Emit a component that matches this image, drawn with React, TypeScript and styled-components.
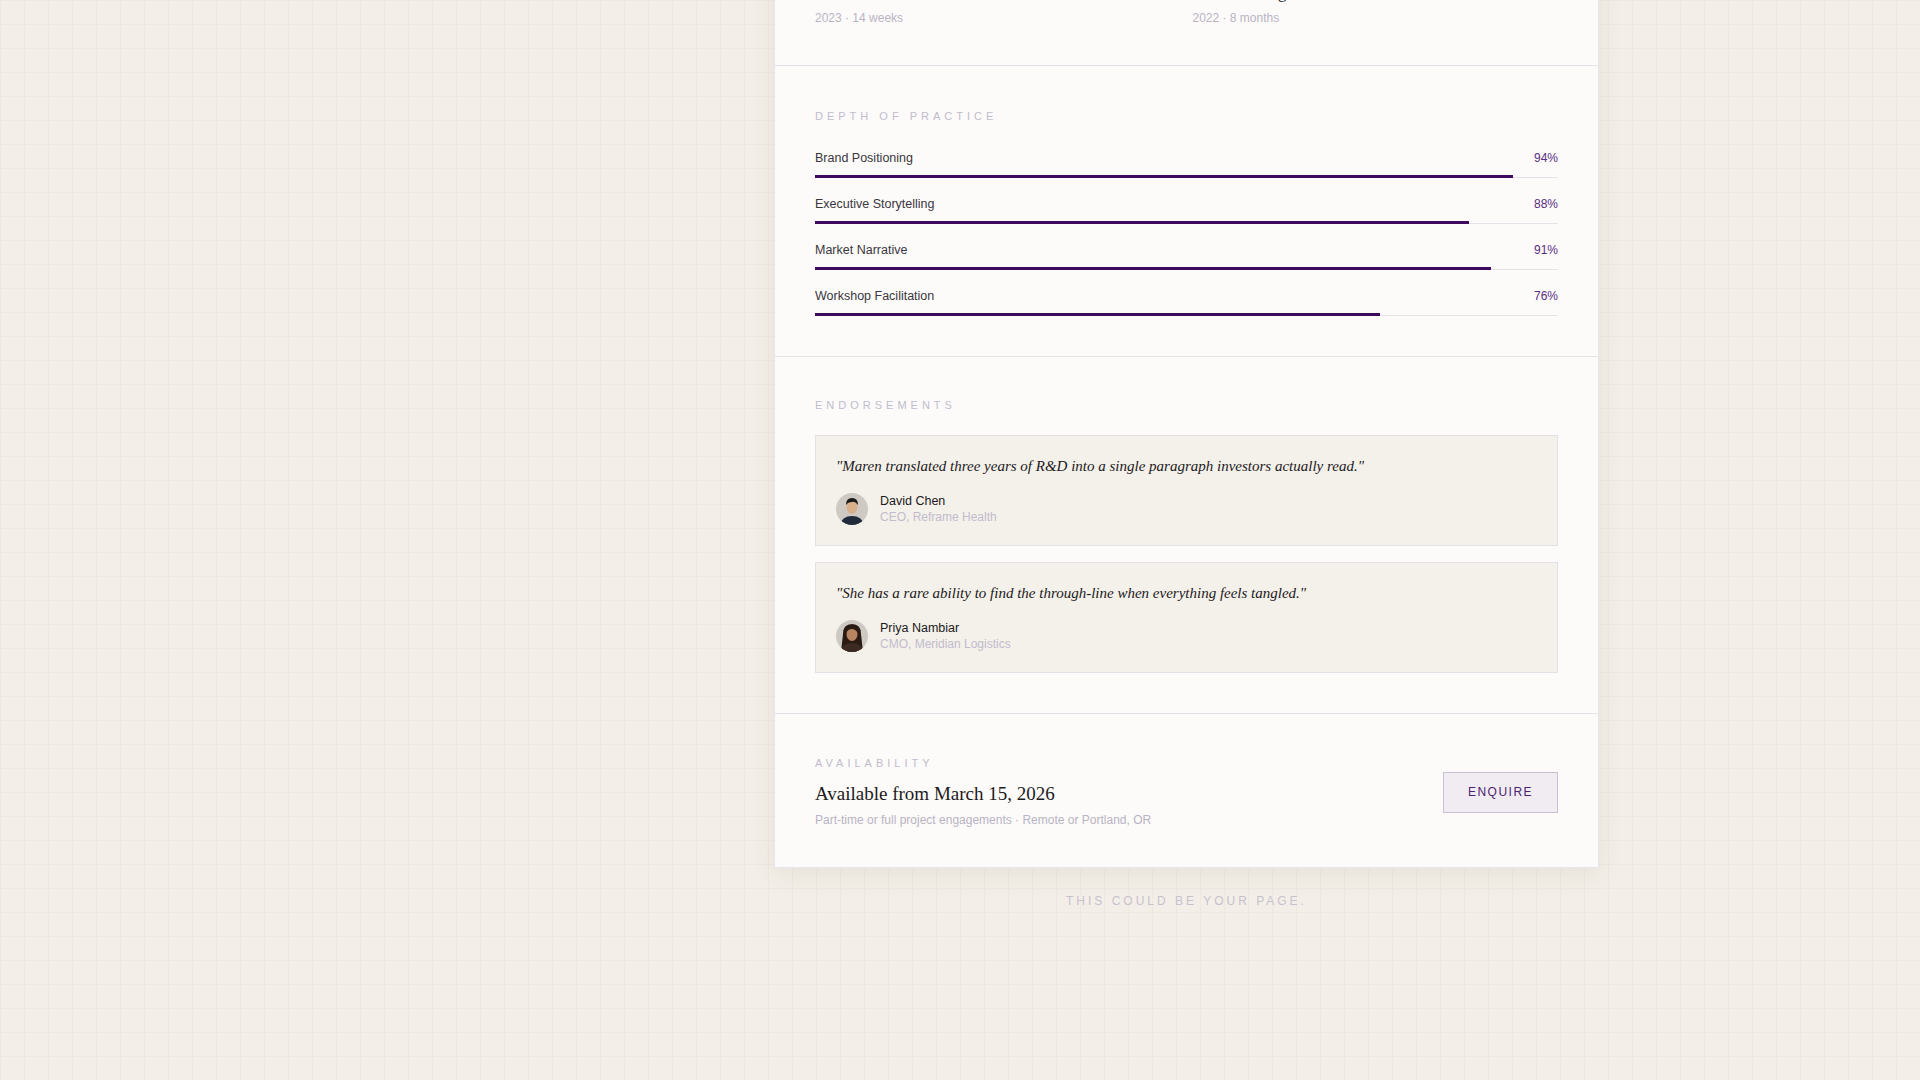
import React from "react";
import styled, { createGlobalStyle } from "styled-components";

const Global = createGlobalStyle`
  html, body { margin: 0; padding: 0; }
  body {
    background-color: #f3efe8;
    background-image:
      linear-gradient(rgba(200,190,175,0.12) 1px, transparent 1px),
      linear-gradient(90deg, rgba(200,190,175,0.12) 1px, transparent 1px);
    background-size: 24px 24px;
    font-family: "Liberation Sans", Arial, sans-serif;
    height: 1080px;
    overflow: hidden;
  }
`;

const Page = styled.div`
  display: grid; grid-template-columns: 774px 825px;
  margin-top: -46px;
`;
const Main = styled.div` grid-column: 2; display: flex; flex-direction: column; align-items: center; `;
const Card = styled.div`
  width: 825px; box-sizing: border-box; background: #fcfbf9; border: 1px solid #e8e4ec;
  box-shadow: 0 6px 24px rgba(80,60,40,0.08);
`;
const Section = styled.section<{ $pt?: number; $pb?: number }>`
  padding: ${p => p.$pt ?? 46}px 40px ${p => p.$pb ?? 40}px;
  & + & { border-top: 1px solid #e6e2ea; }
`;
const Label = styled.div<{ $mb?: number }>`
  font-size: 11px; letter-spacing: 4px; color: #c2bccd; text-transform: uppercase;
  margin-bottom: ${p => p.$mb ?? 24}px;
`;
const Projects = styled.div`
  display: grid; grid-template-columns: 1fr 1fr; gap: 12px;
`;
const ProjTitle = styled.div`
  font-family: "Liberation Serif", serif; font-size: 17px; color: #1d1a22; margin-bottom: 8px;
`;
const Meta = styled.div` font-size: 12px; color: #b9b3c4; `;
const Skill = styled.div` margin-bottom: 18px; &:last-child { margin-bottom: 0; } `;
const SkillHead = styled.div`
  display: flex; justify-content: space-between; font-size: 12.5px; color: #3a3640;
  line-height: 16px; margin-bottom: 9px;
`;
const Pct = styled.span` color: #5a2d82; font-size: 12px; `;
const Track = styled.div` height: 3px; border-bottom: 1px solid #e6e2ea; box-sizing: border-box; `;
const Fill = styled.div` height: 3px; background: #3d0a5e; `;
const Quote = styled.div`
  background: #f4f0ea; border: 1px solid #e4e0e8; padding: 22px 20px 20px;
  & + & { margin-top: 16px; }
`;
const QText = styled.p`
  margin: 0 0 18px; font-family: "Liberation Serif", serif; font-style: italic; font-size: 15px; color: #1d1a22;
`;
const Person = styled.div` display: flex; align-items: center; gap: 12px; `;
const Name = styled.div` font-size: 12.5px; color: #1d1a22; line-height: 16px; `;
const Role = styled.div` font-size: 12px; color: #c2bccd; line-height: 16px; `;
const AvailRow = styled.div` display: flex; justify-content: space-between; align-items: center; `;
const AvailHead = styled.div` font-family: "Liberation Serif", serif; font-size: 19px; color: #1d1a22; margin: -10px 0 8px; `;
const Btn = styled.button`
  width: 115px; height: 41px; background: #f1ecf1; border: 1px solid #c9c1d3;
  color: #4a2470; font-family: "Liberation Sans", Arial, sans-serif; font-size: 12px; letter-spacing: 1.5px;
`;
const Footer = styled.div`
  margin-top: 26px; font-size: 12px; letter-spacing: 3px; color: #c7c1ce;
`;

const skills = [
  ["Brand Positioning", 94], ["Executive Storytelling", 88], ["Market Narrative", 91], ["Workshop Facilitation", 76],
] as const;

const Avatar = ({ id, hair, skin, shirt, long }: { id: string; hair: string; skin: string; shirt: string; long?: boolean }) => (
  <svg width="32" height="32" viewBox="0 0 32 32">
    <defs><clipPath id={id}><circle cx="16" cy="16" r="16" /></clipPath></defs>
    <g clipPath={`url(#${id})`}>
      <rect width="32" height="32" fill="#cfc9c4" />
      {long && <path d="M7 14 Q7 4 16 4 Q25 4 25 14 L27 32 L5 32 Z" fill={hair} />}
      <path d="M4 32 Q6 23 16 23 Q26 23 28 32 Z" fill={shirt} />
      <ellipse cx="16" cy="14" rx="5.5" ry="7" fill={skin} />
      {!long && <path d="M10 12 Q10 5 16 5 Q22 5 22 12 Q19 8 16 9 Q12 9 10 12 Z" fill={hair} />}
      {long && <path d="M10 13 Q11 6 16 6 Q21 6 22 13 Q19 9 16 9 Q12 9 10 13 Z" fill={hair} />}
    </g>
  </svg>
);

export default function App() {
  return (
    <>
      <Global />
      <Page>
        <Main>
          <Card>
            <Section $pt={28} $pb={40}>
              <Projects>
                <div><ProjTitle>Reframe Health — IPO Narrative</ProjTitle><Meta>2023 · 14 weeks</Meta></div>
                <div><ProjTitle>Meridian Logistics — Global Rebrand</ProjTitle><Meta>2022 · 8 months</Meta></div>
              </Projects>
            </Section>
            <Section $pt={44} $pb={40}>
              <Label $mb={28}>Depth of Practice</Label>
              {skills.map(([n, v]) => (
                <Skill key={n}>
                  <SkillHead><span>{n}</span><Pct>{v}%</Pct></SkillHead>
                  <Track><Fill style={{ width: `${v}%` }} /></Track>
                </Skill>
              ))}
            </Section>
            <Section $pt={42} $pb={40}>
              <Label>Endorsements</Label>
              <Quote>
                <QText>"Maren translated three years of R&amp;D into a single paragraph investors actually read."</QText>
                <Person>
                  <Avatar id="av1" hair="#1a1a1a" skin="#d9b08c" shirt="#1f2a3a" />
                  <div><Name>David Chen</Name><Role>CEO, Reframe Health</Role></div>
                </Person>
              </Quote>
              <Quote>
                <QText>"She has a rare ability to find the through-line when everything feels tangled."</QText>
                <Person>
                  <Avatar id="av2" hair="#2a1a14" skin="#b98462" shirt="#3a2a22" long />
                  <div><Name>Priya Nambiar</Name><Role>CMO, Meridian Logistics</Role></div>
                </Person>
              </Quote>
            </Section>
            <Section $pt={43} $pb={40}>
              <AvailRow>
                <div>
                  <Label>Availability</Label>
                  <AvailHead>Available from March 15, 2026</AvailHead>
                  <Meta>Part-time or full project engagements · Remote or Portland, OR</Meta>
                </div>
                <Btn>ENQUIRE</Btn>
              </AvailRow>
            </Section>
          </Card>
          <Footer>THIS COULD BE YOUR PAGE.</Footer>
        </Main>
      </Page>
    </>
  );
}
